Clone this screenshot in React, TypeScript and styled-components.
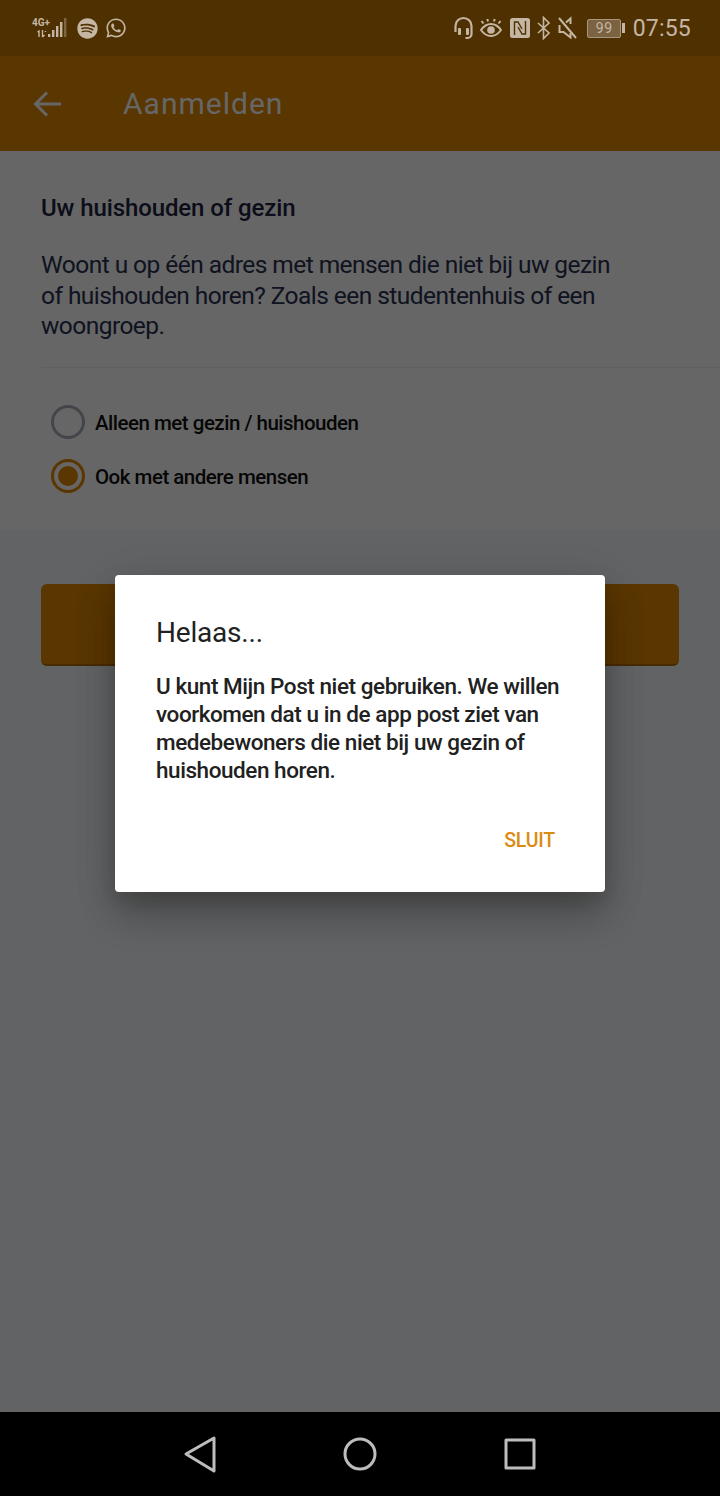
import styled, { createGlobalStyle } from "styled-components";
import { FaSpotify, FaWhatsapp } from "react-icons/fa";

const GlobalStyle = createGlobalStyle`
  html, body {
    margin: 0;
    padding: 0;
    background: #000;
  }
  * {
    box-sizing: border-box;
  }
`;

const Phone = styled.div`
  width: 720px;
  height: 1496px;
  display: flex;
  flex-direction: column;
  overflow: hidden;
  font-family: Roboto, sans-serif;
`;

const StatusBar = styled.div`
  height: 56px;
  flex: none;
  display: flex;
  align-items: center;
  justify-content: space-between;
  padding: 0 29px 0 32px;
  background: #4f3000;
  color: #c4b6a2;
`;

const StatusGroup = styled.div`
  display: flex;
  align-items: center;
  gap: 7.5px;
`;

const NetworkIcon = styled.svg`
  width: 37px;
  height: 22px;
`;

const Time = styled.span`
  font-size: 23px;
  letter-spacing: 0.2px;
`;

const Screen = styled.div`
  flex: 1;
  position: relative;
  display: flex;
  flex-direction: column;
  background: #f6f7f9;
`;

const AppBar = styled.header`
  height: 95px;
  flex: none;
  display: flex;
  align-items: center;
  padding-left: 33px;
  gap: 60px;
  background: #e08700;
  color: #fff;
`;

const PageTitle = styled.h1`
  margin: 0;
  font-size: 30px;
  font-weight: 400;
  letter-spacing: 1px;
`;

const Card = styled.section`
  height: 379px;
  flex: none;
  padding: 42px 0 0 41px;
  background: #fff;
  color: #1c2340;
`;

const Heading = styled.h2`
  margin: 0 0 27px;
  font-size: 24px;
  line-height: 30px;
  font-weight: 500;
  letter-spacing: -0.1px;
`;

const Intro = styled.p`
  margin: 0;
  width: 590px;
  font-size: 24.5px;
  line-height: 30.5px;
  font-weight: 400;
  letter-spacing: -0.55px;
  color: #2a3050;
`;

const Divider = styled.hr`
  margin: 25px 0 0;
  border: 0;
  border-top: 1px solid #eeeef0;
`;

const RadioList = styled.div`
  display: flex;
  flex-direction: column;
  gap: 20px;
  margin-top: 37px;
  padding-left: 10px;
`;

const RadioRow = styled.label`
  display: flex;
  align-items: center;
  gap: 10px;
  height: 34px;
  font-size: 20.5px;
  font-weight: 500;
  letter-spacing: -0.5px;
  color: #111;
`;

const RadioLabel = styled.span`
  padding-top: 2px;
`;

const RadioCircle = styled.span<{ $checked?: boolean }>`
  width: 34px;
  height: 34px;
  flex: none;
  display: flex;
  align-items: center;
  justify-content: center;
  border-radius: 50%;
  border: 3.5px solid ${({ $checked }) => ($checked ? "#e08700" : "#a9adbb")};

  &::after {
    content: "";
    display: ${({ $checked }) => ($checked ? "block" : "none")};
    width: 20px;
    height: 20px;
    border-radius: 50%;
    background: #e08700;
  }
`;

const Actions = styled.div`
  padding: 54px 41px 0;
`;

const PrimaryButton = styled.div`
  height: 82px;
  border-radius: 6px;
  background: #e08700;
  border-bottom: 2px solid #b36c00;
`;

const Scrim = styled.div`
  position: absolute;
  inset: 0;
  display: flex;
  align-items: center;
  justify-content: center;
  background: rgba(0, 0, 0, 0.6);
`;

const Dialog = styled.div`
  width: 490px;
  height: 317px;
  margin-top: -1px;
  padding: 39px 41px 0;
  border-radius: 4px;
  background: #fff;
  color: #212121;
  box-shadow: 0 24px 38px rgba(0, 0, 0, 0.2), 0 9px 46px rgba(0, 0, 0, 0.12), 0 11px 15px rgba(0, 0, 0, 0.1);
`;

const DialogTitle = styled.h3`
  margin: 0 0 20px;
  font-size: 28px;
  line-height: 38px;
  font-weight: 400;
  letter-spacing: -0.2px;
`;

const DialogText = styled.p`
  margin: 0;
  font-size: 22.5px;
  line-height: 28px;
  font-weight: 500;
  letter-spacing: -0.44px;
`;

const DialogActions = styled.div`
  display: flex;
  justify-content: flex-end;
  margin-top: 43px;
  margin-right: 9px;
`;

const CloseButton = styled.span`
  font-size: 19.5px;
  line-height: 28px;
  font-weight: 500;
  letter-spacing: -0.2px;
  color: #dc8b12;
`;

const NavBar = styled.nav`
  height: 84px;
  flex: none;
  display: flex;
  align-items: center;
  justify-content: center;
  gap: 110px;
  background: #000;
`;

const NavIcon = styled.svg`
  width: 50px;
  height: 50px;
  fill: none;
  stroke: #bdbdbd;
  stroke-width: 3;
  stroke-linejoin: round;
`;

const Glyph = styled.svg<{ $w: number }>`
  width: ${({ $w }) => $w}px;
  height: 24px;
  flex: none;
  fill: none;
  stroke: currentColor;
`;

const BatteryWrap = styled.div`
  display: flex;
  align-items: center;
  gap: 1px;
  margin-left: 3px;
`;

const BatteryBody = styled.div`
  width: 34px;
  height: 19px;
  display: flex;
  align-items: center;
  justify-content: center;
  border: 1px solid #a8977e;
  border-radius: 2px;
  background: #7b6342;
  font-size: 14px;
  letter-spacing: 0.6px;
`;

const BatteryTip = styled.div`
  width: 3px;
  height: 10px;
  background: #c4b6a2;
`;

function Network() {
  return (
    <NetworkIcon viewBox="0 0 37 22">
      <text x="0" y="9" fontSize="10" fontWeight="700" fill="currentColor">4G+</text>
      <path d="M7 20v-6l-1.500 1M10.500 13v7M10.500 20l2-2M13.500 14v1" stroke="currentColor" strokeWidth="1.400" fill="none" />
      <rect x="16" y="17" width="2.400" height="3" fill="currentColor" />
      <rect x="20" y="13" width="2.400" height="7" fill="currentColor" />
      <rect x="24" y="9" width="2.400" height="11" fill="currentColor" />
      <rect x="28" y="5" width="2.400" height="15" fill="currentColor" />
      <rect x="32" y="1" width="2.400" height="19" fill="currentColor" opacity="0.4" />
    </NetworkIcon>
  );
}

function Headset() {
  return (
    <Glyph $w={19} viewBox="0 0 19 24" strokeWidth="2.200">
      <path d="M1.500 16v-6a8 8 0 0 1 16 0v8a4 4 0 0 1-4 4h-2" />
      <rect x="4" y="12" width="3" height="7" rx="1" fill="currentColor" stroke="none" />
      <rect x="12" y="12" width="3" height="7" rx="1" fill="currentColor" stroke="none" />
    </Glyph>
  );
}

function Eye() {
  return (
    <Glyph $w={22} viewBox="0 0 22 24" strokeWidth="2">
      <path d="M1 14c2.800-4 6-6 10-6s7.200 2 10 6c-2.800 4-6 6-10 6s-7.200-2-10-6z" />
      <circle cx="11" cy="14" r="3.800" fill="currentColor" stroke="none" />
      <path d="M3.500 7.500L1.500 5M8 5.500L7.300 3M14 5.500l.7-2.500M18.500 7.500l2-2.500" />
    </Glyph>
  );
}

function Nfc() {
  return (
    <Glyph $w={20} viewBox="0 0 20 24" strokeWidth="0">
      <rect x="0" y="2" width="20" height="20" rx="2.500" fill="currentColor" />
      <path
        d="M4.500 19V6h3.500l4 7M15.500 5v13H12l-4-7"
        stroke="#4f3000"
        strokeWidth="1.400"
        fill="none"
      />
    </Glyph>
  );
}

function Bluetooth() {
  return (
    <Glyph $w={13} viewBox="0 0 13 24" strokeWidth="1.600">
      <path d="M1 7l11 10-5.500 5.500V1.500L12 7 1 17" />
    </Glyph>
  );
}

function Muted() {
  return (
    <Glyph $w={19} viewBox="0 0 19 24" strokeWidth="2">
      <path d="M1.500 9v7h4l7 5.500V17M12.500 8V2.500L8 6.500" />
      <path d="M1 2l17 20" />
    </Glyph>
  );
}

export default function App() {
  return (
    <Phone>
      <GlobalStyle />
      <StatusBar>
        <StatusGroup>
          <Network />
          <FaSpotify size={21} />
          <FaWhatsapp size={22} />
        </StatusGroup>
        <StatusGroup>
          <Headset />
          <Eye />
          <Nfc />
          <Bluetooth />
          <Muted />
          <BatteryWrap>
            <BatteryBody>99</BatteryBody>
            <BatteryTip />
          </BatteryWrap>
          <Time>07:55</Time>
        </StatusGroup>
      </StatusBar>

      <Screen>
        <AppBar>
          <svg width="30" height="30" viewBox="0 0 30 30" fill="none" stroke="#fff" strokeWidth="3">
            <path d="M28 15H3M14 3.500L2.500 15 14 26.500" />
          </svg>
          <PageTitle>Aanmelden</PageTitle>
        </AppBar>

        <Card>
          <Heading>Uw huishouden of gezin</Heading>
          <Intro>
            Woont u op één adres met mensen die niet bij uw gezin of huishouden horen? Zoals een
            studentenhuis of een woongroep.
          </Intro>
          <Divider />
          <RadioList>
            <RadioRow>
              <RadioCircle />
              <RadioLabel>Alleen met gezin / huishouden</RadioLabel>
            </RadioRow>
            <RadioRow>
              <RadioCircle $checked />
              <RadioLabel>Ook met andere mensen</RadioLabel>
            </RadioRow>
          </RadioList>
        </Card>

        <Actions>
          <PrimaryButton />
        </Actions>

        <Scrim>
          <Dialog>
            <DialogTitle>Helaas...</DialogTitle>
            <DialogText>
              U kunt Mijn Post niet gebruiken. We willen voorkomen dat u in de app post ziet van
              medebewoners die niet bij uw gezin of huishouden horen.
            </DialogText>
            <DialogActions>
              <CloseButton>SLUIT</CloseButton>
            </DialogActions>
          </Dialog>
        </Scrim>
      </Screen>

      <NavBar>
        <NavIcon viewBox="0 0 50 50">
          <path d="M11 25L39 9v33z" />
        </NavIcon>
        <NavIcon viewBox="0 0 50 50">
          <circle cx="25" cy="25" r="15" />
        </NavIcon>
        <NavIcon viewBox="0 0 50 50">
          <rect x="11" y="11" width="28" height="28" />
        </NavIcon>
      </NavBar>
    </Phone>
  );
}
